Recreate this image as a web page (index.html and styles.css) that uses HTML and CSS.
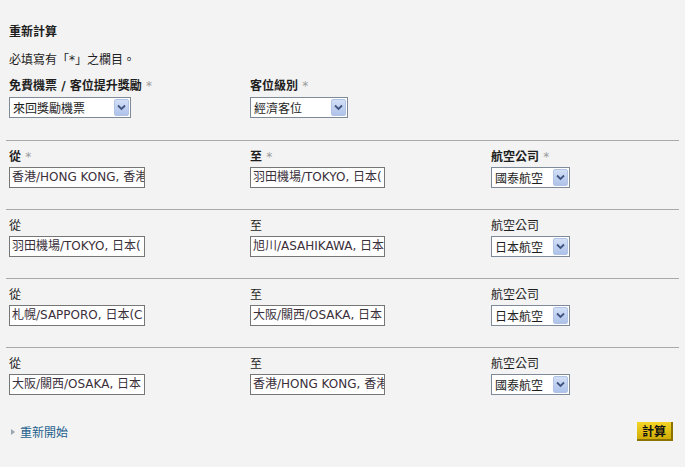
FILE: index.html
```html
<!DOCTYPE html>
<html lang="zh-Hant">
<head>
    <meta charset="UTF-8">
    <title>重新計算</title>
    <link rel="stylesheet" href="styles.css">
</head>
<body>
    <div class="page">
        <h2 class="title">重新計算</h2>
        <p class="note">必填寫有「*」之欄目。</p>

        <div class="row top">
            <div class="field">
                <div class="lbl bold">免費機票 / 客位提升獎勵 <span class="star">*</span></div>
                <div class="select w-award"><span class="val">來回獎勵機票</span><span class="arrow"><svg width="9" height="7" viewBox="0 0 9 7"><path d="M1 1.5 L4.5 5 L8 1.5" fill="none" stroke="#3f5480" stroke-width="1.8"/></svg></span></div>
            </div>
            <div class="field">
                <div class="lbl bold">客位級別 <span class="star">*</span></div>
                <div class="select w-class"><span class="val">經濟客位</span><span class="arrow"><svg width="9" height="7" viewBox="0 0 9 7"><path d="M1 1.5 L4.5 5 L8 1.5" fill="none" stroke="#3f5480" stroke-width="1.8"/></svg></span></div>
            </div>
        </div>

        <div class="row sector">
            <div class="field">
                <div class="lbl bold">從 <span class="star">*</span></div>
                <div class="input w-from">香港/HONG KONG, 香港</div>
            </div>
            <div class="field">
                <div class="lbl bold">至 <span class="star">*</span></div>
                <div class="input w-to">羽田機場/TOKYO, 日本(</div>
            </div>
            <div class="field">
                <div class="lbl bold">航空公司 <span class="star">*</span></div>
                <div class="select w-air"><span class="val">國泰航空</span><span class="arrow"><svg width="9" height="7" viewBox="0 0 9 7"><path d="M1 1.5 L4.5 5 L8 1.5" fill="none" stroke="#3f5480" stroke-width="1.8"/></svg></span></div>
            </div>
        </div>

        <div class="row sector">
            <div class="field">
                <div class="lbl">從</div>
                <div class="input w-from">羽田機場/TOKYO, 日本(</div>
            </div>
            <div class="field">
                <div class="lbl">至</div>
                <div class="input w-to">旭川/ASAHIKAWA, 日本</div>
            </div>
            <div class="field">
                <div class="lbl">航空公司</div>
                <div class="select w-air"><span class="val">日本航空</span><span class="arrow"><svg width="9" height="7" viewBox="0 0 9 7"><path d="M1 1.5 L4.5 5 L8 1.5" fill="none" stroke="#3f5480" stroke-width="1.8"/></svg></span></div>
            </div>
        </div>

        <div class="row sector">
            <div class="field">
                <div class="lbl">從</div>
                <div class="input w-from">札幌/SAPPORO, 日本(C</div>
            </div>
            <div class="field">
                <div class="lbl">至</div>
                <div class="input w-to">大阪/關西/OSAKA, 日本</div>
            </div>
            <div class="field">
                <div class="lbl">航空公司</div>
                <div class="select w-air"><span class="val">日本航空</span><span class="arrow"><svg width="9" height="7" viewBox="0 0 9 7"><path d="M1 1.5 L4.5 5 L8 1.5" fill="none" stroke="#3f5480" stroke-width="1.8"/></svg></span></div>
            </div>
        </div>

        <div class="row sector">
            <div class="field">
                <div class="lbl">從</div>
                <div class="input w-from">大阪/關西/OSAKA, 日本</div>
            </div>
            <div class="field">
                <div class="lbl">至</div>
                <div class="input w-to">香港/HONG KONG, 香港</div>
            </div>
            <div class="field">
                <div class="lbl">航空公司</div>
                <div class="select w-air"><span class="val">國泰航空</span><span class="arrow"><svg width="9" height="7" viewBox="0 0 9 7"><path d="M1 1.5 L4.5 5 L8 1.5" fill="none" stroke="#3f5480" stroke-width="1.8"/></svg></span></div>
            </div>
        </div>

        <div class="foot">
            <a class="restart" href="#"><span class="tri"></span>重新開始</a>
            <button class="calc">計算</button>
        </div>
    </div>
</body>
</html>
```

FILE: styles.css
```css
body {
    margin: 0;
    background: #f3f3f3;
    font-family: Verdana, "DejaVu Sans", "Noto Sans CJK TC", sans-serif;
    font-size: 12px;
    color: #1e1e1e;
}
.page {
    padding: 25px 6px 0 6px;
}
.title {
    margin: 0 0 0 3px;
    font-size: 12px;
    line-height: 15px;
    font-weight: bold;
}
.note {
    margin: 13px 0 0 3px;
    line-height: 15px;
}
.row {
    display: grid;
    grid-template-columns: 241px 241px 1fr;
    padding: 0 3px 21px 3px;
}
.row.top {
    margin-top: 11px;
    padding-bottom: 22px;
}
.row.sector {
    border-top: 1px solid #a9a9a9;
    padding-top: 9px;
}
.lbl {
    line-height: 14px;
    margin-bottom: 3px;
    white-space: nowrap;
}
.top .lbl {
    margin-bottom: 4px;
}
.bold {
    font-weight: bold;
}
.star {
    color: #9a9a9a;
    font-weight: normal;
}
.input {
    box-sizing: border-box;
    height: 21px;
    border: 1px solid #767676;
    background: #fff;
    padding: 0 2px;
    line-height: 19px;
    font-size: 12px;
    color: #3a2f3a;
    white-space: nowrap;
    overflow: hidden;
}
.w-from { width: 136px; }
.w-to { width: 135px; }
.select {
    box-sizing: border-box;
    height: 21px;
    border: 1px solid #7f8a99;
    background: #fff;
    display: flex;
    align-items: center;
    justify-content: space-between;
    padding: 0 1px 0 3px;
}
.w-award { width: 122px; }
.w-class { width: 98px; }
.w-air { width: 79px; }
.val {
    white-space: nowrap;
}
.arrow {
    box-sizing: border-box;
    width: 15px;
    height: 17px;
    border: 1px solid #b2c4e6;
    border-radius: 2px;
    background: linear-gradient(#d3dff6, #aec2ea);
    display: flex;
    align-items: center;
    justify-content: center;
}
.foot {
    display: flex;
    justify-content: space-between;
    align-items: center;
    margin-top: 6px;
    padding: 0 3px 0 3px;
}
.restart {
    color: #1d5f8c;
    text-decoration: none;
    display: flex;
    align-items: center;
    gap: 5px;
    font-size: 12px;
}
.tri {
    width: 0;
    height: 0;
    border-left: 4px solid #9aa6b0;
    border-top: 3px solid transparent;
    border-bottom: 3px solid transparent;
    margin-left: 2px;
}
.calc {
    width: 36px;
    height: 19px;
    padding: 0;
    border: none;
    border-right: 2px solid #8a7300;
    border-bottom: 2px solid #8a7300;
    background: linear-gradient(#f4d526, #d1ac05);
    font-family: Verdana, "DejaVu Sans", "Noto Sans CJK TC", sans-serif;
    font-size: 12px;
    font-weight: bold;
    color: #111;
    margin-right: 3px;
}
```
